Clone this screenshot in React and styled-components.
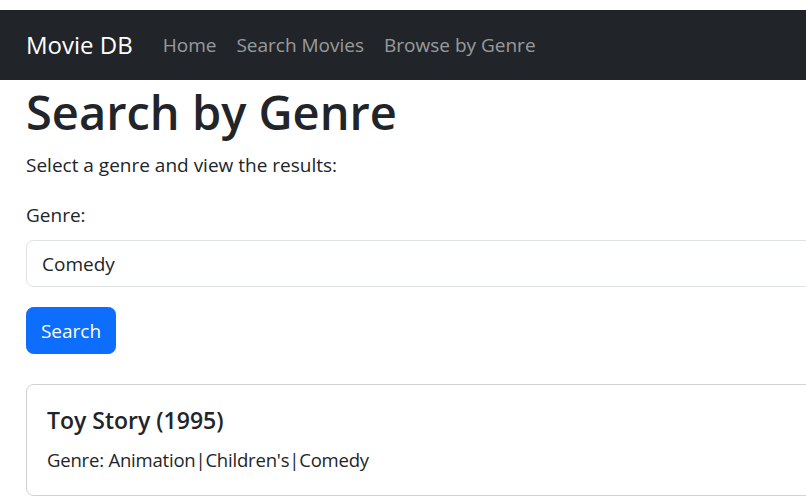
import React from "react";
import styled, { createGlobalStyle } from "styled-components";

const GlobalStyle = createGlobalStyle`
  html, body {
    margin: 0;
    padding: 0;
    overflow: hidden;
    background: #fff;
  }
  body {
    font-family: "Open Sans", "Noto Sans", sans-serif;
    color: #212529;
  }
`;

// page is wider than the window, the form and card run off the right edge
const Page = styled.div`
  padding-top: 10px;
  width: 1200px;
`;

const Navbar = styled.nav`
  display: flex;
  align-items: center;
  height: 70px;
  padding: 0 26px;
  background-color: #212529;
`;

const Brand = styled.a`
  font-size: 24px;
  color: #fff;
  margin-right: 20px;
  text-decoration: none;
  line-height: 30px;
`;

const NavLink = styled.a`
  font-size: 19px;
  line-height: 30px;
  padding: 0 10px;
  color: rgba(255, 255, 255, 0.55);
  text-decoration: none;
`;

const Container = styled.main`
  padding: 0 26px;
`;

const Title = styled.h1`
  font-size: 47px;
  font-weight: 600;
  line-height: 60px;
  margin: 0 0 10px;
  padding-top: 2px;
  height: 58px;
`;

const Lead = styled.p`
  font-size: 19px;
  line-height: 30px;
  margin: 0 0 20px;
`;

const Label = styled.label`
  display: block;
  font-size: 19px;
  line-height: 30px;
  margin-bottom: 10px;
`;

const Select = styled.div`
  box-sizing: border-box;
  height: 47px;
  display: flex;
  align-items: center;
  padding: 0 15px;
  font-size: 19px;
  border: 1px solid #dee2e6;
  border-radius: 7.5px;
  margin-bottom: 20px;
`;

const Button = styled.button`
  font-family: inherit;
  font-size: 19px;
  line-height: 30px;
  height: 47px;
  width: 90px;
  padding: 0;
  color: #fff;
  background-color: #0d6efd;
  border: 1px solid #0d6efd;
  border-radius: 7.5px;
  margin-bottom: 30px;
  display: block;
`;

const Card = styled.div`
  border: 1px solid rgba(0, 0, 0, 0.175);
  border-radius: 7.5px;
  padding: 20px;
`;

const CardTitle = styled.h5`
  font-size: 23px;
  font-weight: 600;
  line-height: 30px;
  margin: 0 0 10px;
`;

const CardText = styled.p`
  font-size: 18.5px;
  line-height: 30px;
  letter-spacing: -0.2px;
  margin: 0;
`;

export default function App() {
  return (
    <Page>
      <GlobalStyle />
      <Navbar>
        <Brand>Movie DB</Brand>
        <NavLink>Home</NavLink>
        <NavLink>Search Movies</NavLink>
        <NavLink>Browse by Genre</NavLink>
      </Navbar>
      <Container>
        <Title>Search by Genre</Title>
        <Lead>Select a genre and view the results:</Lead>
        <Label>Genre:</Label>
        <Select>Comedy</Select>
        <Button>Search</Button>
        <Card>
          <CardTitle>Toy Story (1995)</CardTitle>
          <CardText>Genre: Animation|Children's|Comedy</CardText>
        </Card>
      </Container>
    </Page>
  );
}
